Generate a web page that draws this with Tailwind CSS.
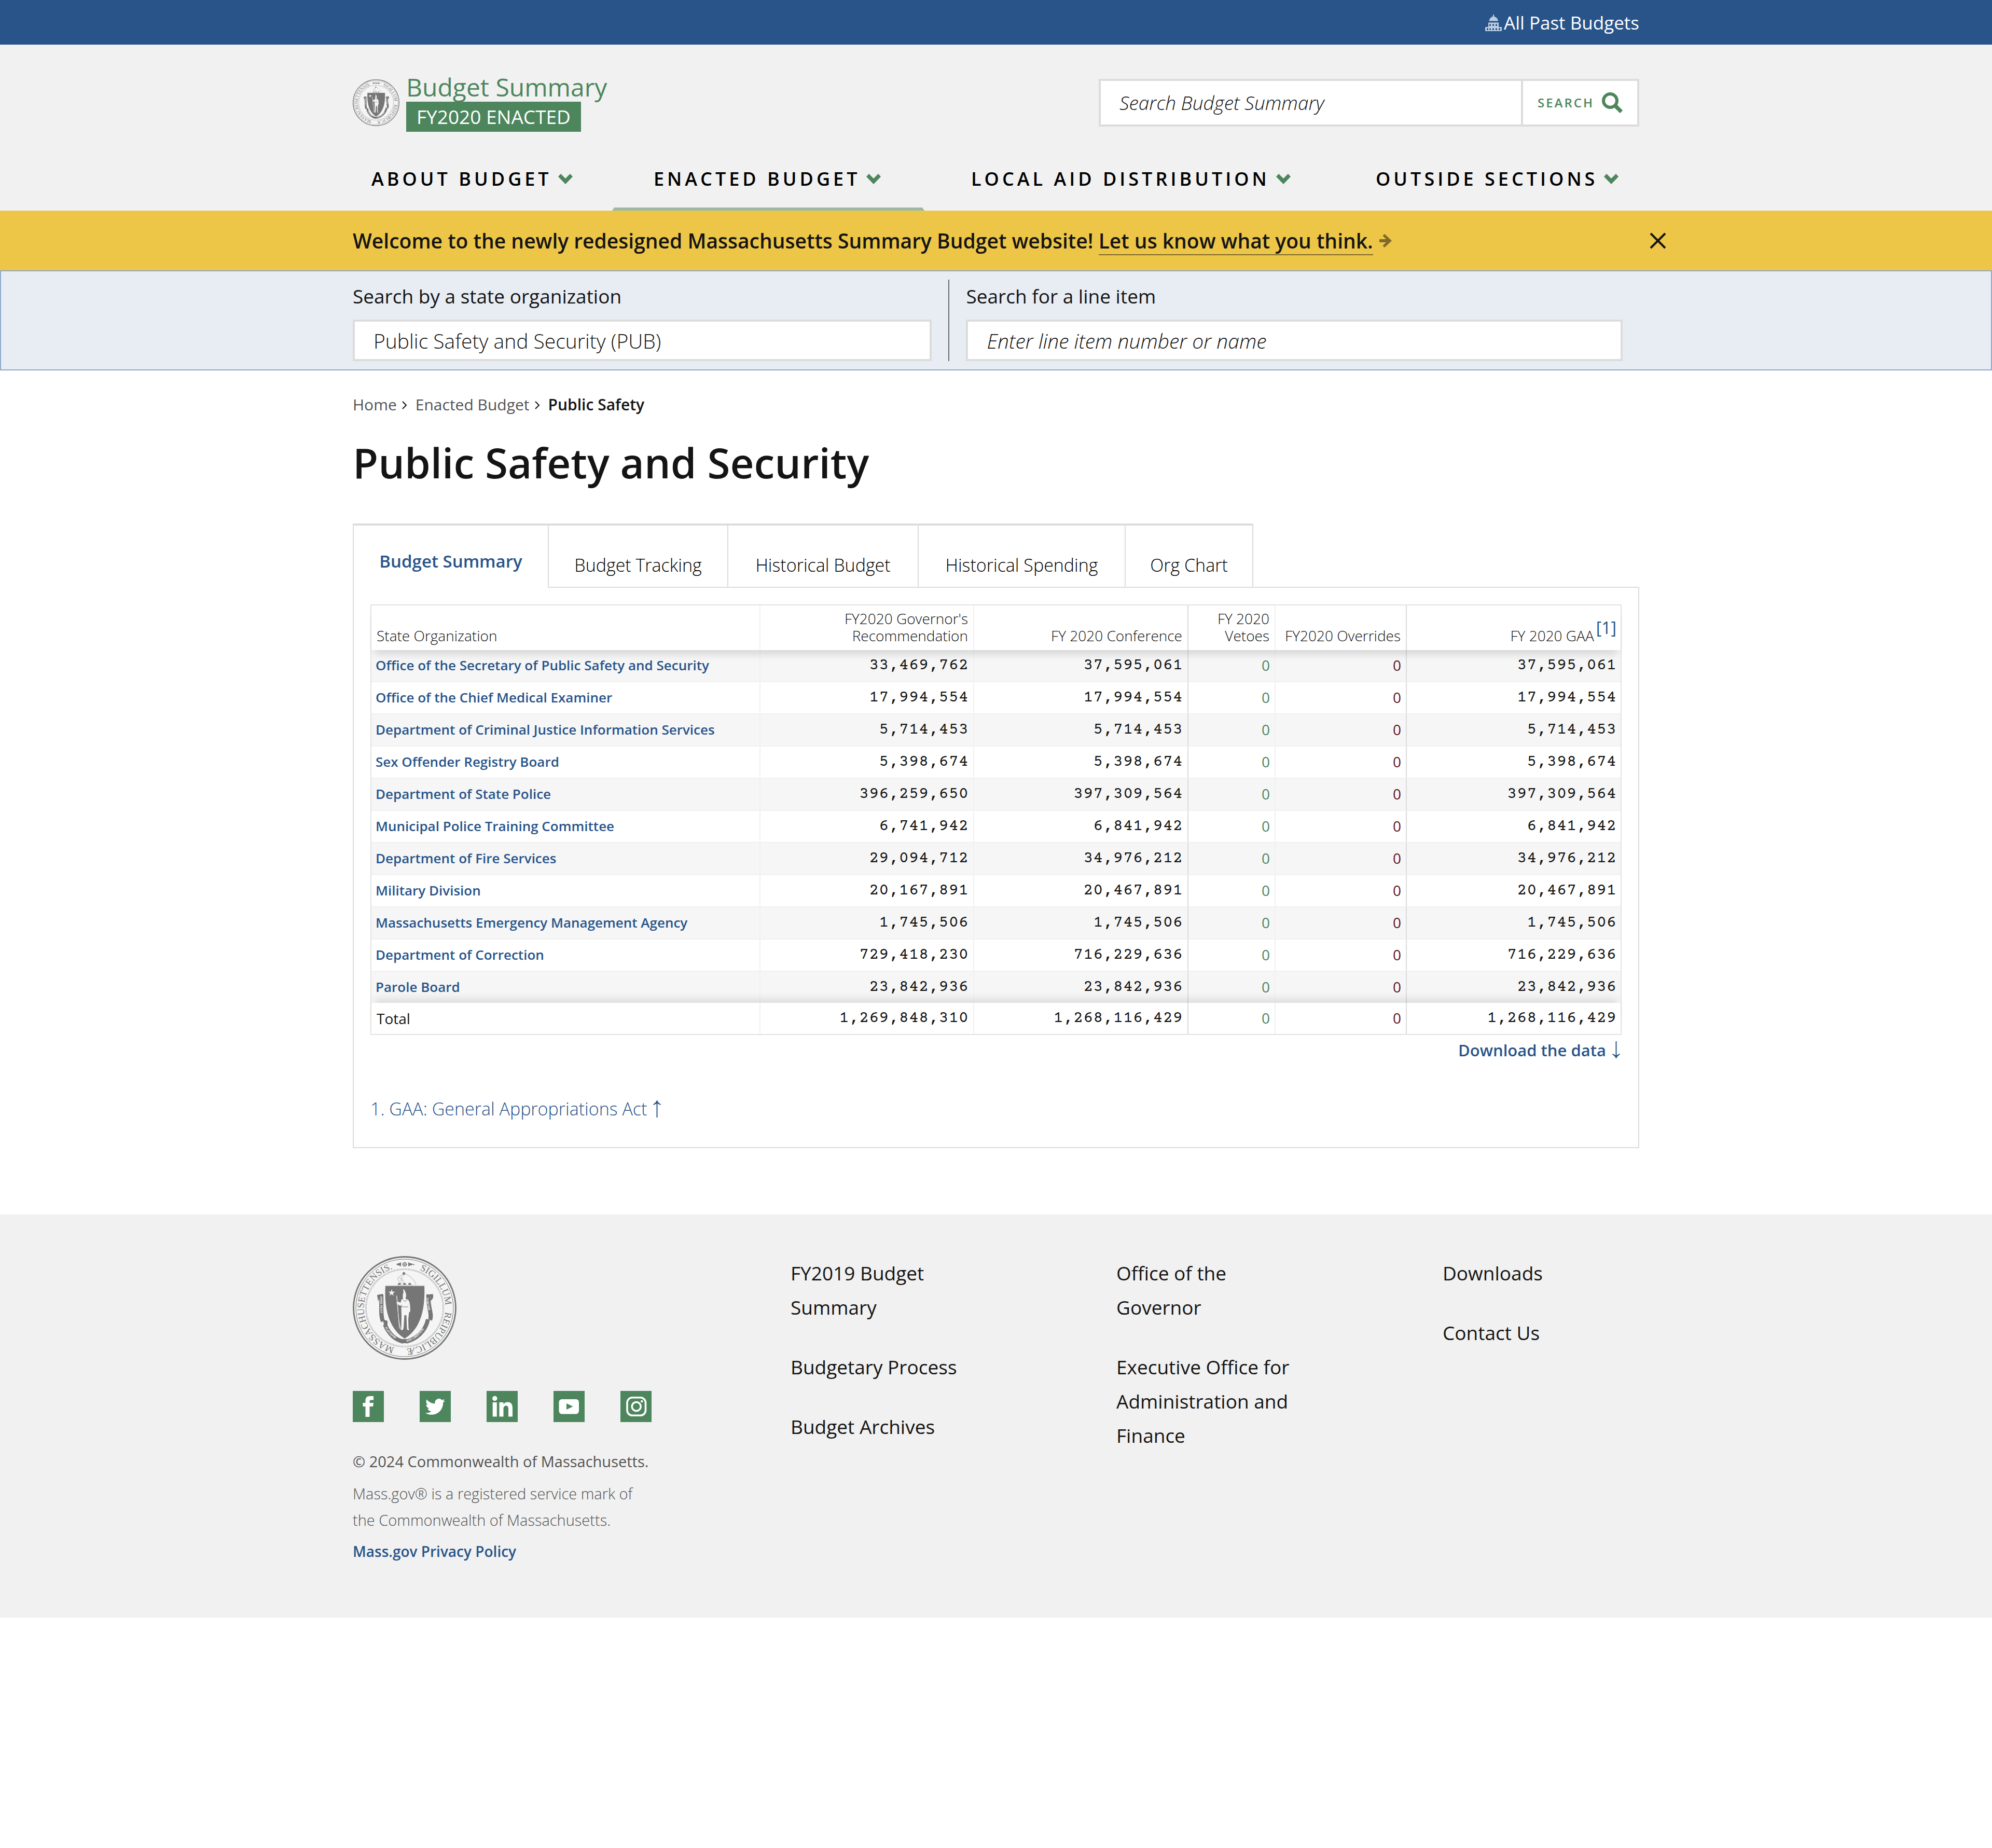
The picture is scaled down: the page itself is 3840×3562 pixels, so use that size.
<!DOCTYPE html>
<html lang="en">
<head>
<meta charset="utf-8">
<meta name="viewport" content="width=device-width, initial-scale=1">
<title>Public Safety and Security - Budget Summary FY2020 Enacted</title>
<script src="https://cdn.jsdelivr.net/npm/@tailwindcss/browser@4"></script>
</head>
<body class="bg-white font-['Open_Sans',sans-serif] text-[#141414]">

<!-- Shared symbols -->
<svg class="hidden" aria-hidden="true">
  <symbol id="chevron" viewBox="0 0 28 20"><path fill="#4d865d" d="M5 0 14 9 23 0 28 5.500 14 20 0 5.500Z"/></symbol>
  <symbol id="seal" viewBox="0 0 200 200">
    <defs>
      <path id="ring" d="M100 21.500A78.500 78.500 0 0 1 100 178.500A78.500 78.500 0 0 1 100 21.500"/>
      <path id="ribbon-l" d="M55 78C56 98 53 112 58 126"/>
      <path id="ribbon-ll" d="M62 138C70 152 84 163 98 166.500"/>
      <path id="ribbon-rr" d="M104 166C122 160 140 146 144 122"/>
      <path id="ribbon-r" d="M144 80C144 98 152 112 149 120"/>
    </defs>
    <circle cx="100" cy="100" r="98.500" fill="#f5f5f5" stroke="#767676" stroke-width="2.800"/>
    <circle cx="100" cy="100" r="94" fill="none" stroke="#767676" stroke-width="1"/>
    <circle cx="100" cy="100" r="74.500" fill="none" stroke="#858585" stroke-width="2.600" stroke-dasharray="1.600 1.400"/>
    <circle cx="100" cy="100" r="74.500" fill="none" stroke="#f5f5f5" stroke-width="0.900"/>
    <g fill="#767676" font-family="'Liberation Serif', serif" font-size="18.500">
      <text><textPath href="#ring" startOffset="6%">SIGILLUM</textPath></text>
      <text><textPath href="#ring" startOffset="26.500%">REIPUBLICÆ</textPath></text>
      <text><textPath href="#ring" startOffset="54%">MASSACHUSETTENSIS.</textPath></text>
    </g>
    <g fill="#767676">
      <circle cx="100" cy="16" r="3.200" fill="none" stroke="#767676" stroke-width="2.600" stroke-dasharray="2 0.600"/>
      <circle cx="100" cy="16" r="1.100"/>
      <path d="M93 12V20L89 18 86 17.500A1.500 1.500 0 1 1 86 14.500L89 14ZM107 12V20L111 18 114 17.500A1.500 1.500 0 1 0 114 14.500L111 14Z"/>
      <circle cx="117.500" cy="16.500" r="1.200"/>
      <path d="M63 57.500H138C140 104 130 141 100 159 71 141 60 104 63 57.500Z"/>
      <path d="M87 54C88 51 91 51 93 54 91 56 88 56 87 54ZM97 54C98 51 101 51 103 54 101 56 98 56 97 54ZM107 54C108 51 111 51 113 54 111 56 108 56 107 54Z"/>
      <circle cx="98.500" cy="33.500" r="2.600"/>
    </g>
    <g fill="none" stroke="#9a9a9a" stroke-width="0.800">
      <path d="M97 35 88 41C85 44 87 46 91 50L96 53M100 35C96 40 93 42 94 45L99 51M101 34C111 38 119 46 122 56M90 42 95 44M92 47 97 46"/>
      <path d="M85 56H116"/>
    </g>
    <path fill="none" stroke="#d4d4d4" stroke-width="1" d="M62 57H139"/>
    <g fill="none" stroke="#767676" stroke-width="8">
      <path d="M55 74C56 98 53 112 58 126"/>
      <path d="M62 132C70 152 84 162 97 165"/>
      <path d="M103 165C122 160 140 146 145 122"/>
      <path d="M146 74C144 98 154 112 149 123"/>
    </g>
    <g fill="#767676">
      <path d="M47 75 58 73 57 80 51 82 49 88ZM142 75 154 73C157 78 154 84 150 86L150 78ZM58 122 67 125 67 134 60 132ZM95 160H105V168H95Z"/>
    </g>
    <g fill="#f0f0f0" font-family="'Liberation Sans', sans-serif" font-weight="700" font-size="5.500">
      <text dy="2"><textPath href="#ribbon-l">ENSE PETIT</textPath></text>
      <text dy="0"><textPath href="#ribbon-ll">PLACIDAM</textPath></text>
      <text dy="0"><textPath href="#ribbon-rr">SVB LIBERTATE</textPath></text>
      <text dy="2"><textPath href="#ribbon-r">QVIETEM</textPath></text>
    </g>
    <g fill="#f5f5f5">
      <path d="M75 64 76.600 68.800H81.600L77.500 71.700 79 76.500 75 73.500 71 76.500 72.500 71.700 68.400 68.800H73.400Z"/>
      <path d="M97 64C100 64 101 68 102 71 103.500 74 103 79 101.500 82L106 84C109 86 110 90 110.500 95L111 106 108.500 109 107 122 107.500 140C110 142 109 143 106 142.500L104.500 141 103.500 114H99.500L98 138 97 142C94 143.500 92 142 93.500 140L94 114 93.500 100 95 94 92 96C89 95 86 93 84 90L88 88 92 90 94 84 97 82C96 78 96.500 72 98 70Z"/>
    </g>
    <path d="M84.500 76C88 95 86 120 93 142M84.500 76 90 140" fill="none" stroke="#e8e8e8" stroke-width="1"/>
    <path d="M95 98H107M97 84C99 88 103 88 104 84M101 115V139" fill="none" stroke="#767676" stroke-width="1"/>
  </symbol>
</svg>

<div class="bg-[#28548a]">
  <div class="mx-auto flex w-full max-w-[2480px] justify-end pt-5 pb-[18px]">
    <a href="#" class="flex items-center gap-1 text-[35px] leading-[48px] text-white">
      <svg class="size-8" viewBox="0 0 32 32" fill="#bccde0" aria-hidden="true">
        <path d="M15 0H17V3.500C21.500 5 24.500 8 25 12.500H7.500C8 8 10.500 5 15 3.500ZM6 15.500H26V24H31A1 1 0 0 1 32 25V31A1 1 0 0 1 31 32H1A1 1 0 0 1 0 31V25A1 1 0 0 1 1 24H6Z"/>
        <path fill="#28548a" d="M8 18.500H11V22H8ZM14 18.500H17V22H14ZM20 18.500H23V22H20ZM3 26.500H6V30H3ZM8.500 26.500H11V30H8.500ZM14 26.500H17V30H14ZM20 26.500H23V30H20ZM26 26.500H29V30H26Z"/>
      </svg>
      All Past Budgets
    </a>
  </div>
</div>

<header class="bg-[#f1f1f1]">
  <div class="mx-auto w-full max-w-[2480px]">
    <div class="flex h-[198px] items-start justify-between">
      <a href="#" class="flex items-start gap-[13px] pt-[60px]">
        <svg class="mt-[7px] size-[90px]" role="img" aria-label="Seal of Massachusetts"><use href="#seal"/></svg>
        <span class="flex flex-col items-start gap-[6px]">
          <span class="text-[48px] leading-[44px] font-medium text-[#4d865d]">Budget Summary</span>
          <span class="bg-[#4d865d] px-5 text-[37px] leading-[58px] text-white">FY2020 ENACTED</span>
        </span>
      </a>
      <form class="mt-[66px] flex h-[92px] w-[1042px] border-4 border-[#dcdcdc] bg-white">
        <input type="text" aria-label="Search Budget Summary" placeholder="Search Budget Summary" class="min-w-0 flex-1 px-9 text-[37px] font-light italic placeholder:text-[#141414]">
        <button type="button" class="flex w-[224px] items-center justify-between border-l-4 border-[#dcdcdc] px-7 text-[24px] font-semibold tracking-[3px] text-[#4d865d]">SEARCH
          <svg class="size-10" viewBox="0 0 40 40" fill="none" stroke="#4d865d" aria-hidden="true"><circle cx="16" cy="16" r="13" stroke-width="6"/><path d="M25 25 37.500 37.500" stroke-width="7.500"/></svg>
        </button>
      </form>
    </div>
    <nav class="grid grid-cols-[500fr_602fr_790fr_588fr] text-[36px] leading-[122px] font-semibold tracking-[6px] whitespace-nowrap text-black">
      <a href="#" class="flex items-center gap-3 pl-9">ABOUT BUDGET <svg class="h-5 w-7"><use href="#chevron"/></svg></a>
      <a href="#" class="relative flex items-center gap-3 pl-20">ENACTED BUDGET <svg class="h-5 w-7"><use href="#chevron"/></svg>
        <span class="absolute inset-x-0 bottom-0 border-x-4 border-b-[6px] border-x-transparent border-b-[#9db9a6]"></span></a>
      <a href="#" class="flex items-center gap-3 pl-[90px]">LOCAL AID DISTRIBUTION <svg class="h-5 w-7"><use href="#chevron"/></svg></a>
      <a href="#" class="flex items-center gap-3 pl-20">OUTSIDE SECTIONS <svg class="h-5 w-7"><use href="#chevron"/></svg></a>
    </nav>
  </div>
</header>

<div class="bg-[#edc647]">
  <div class="relative mx-auto flex h-[115px] w-full max-w-[2480px] items-center">
    <p class="text-[39px] leading-[48px] font-semibold">Welcome to the newly redesigned Massachusetts Summary Budget website! <a href="#" class="border-b-2 border-[#80692b]">Let us know what you think.</a></p>
    <svg class="ml-3 h-[26px] w-6" viewBox="0 0 24 26" fill="#80692b" aria-hidden="true"><path d="M0 10H13L6.500 3.500 10 0 24 13 10 26 6.500 22.500 13 16H0Z"/></svg>
    <button type="button" aria-label="Close" class="absolute -right-[52px]"><svg class="size-8" viewBox="0 0 32 32" stroke="#141414" stroke-width="4" aria-hidden="true"><path d="M2 2 30 30M30 2 2 30"/></svg></button>
  </div>
</div>

<section class="border-2 border-[#8fa8cb] bg-[#e8edf4] py-4">
  <div class="mx-auto flex w-full max-w-[2480px] pr-8">
    <div class="flex flex-[1116] flex-col gap-[13px]">
      <label for="org" class="text-[37px] leading-[64px]">Search by a state organization</label>
      <input id="org" type="text" value="Public Safety and Security (PUB)" class="h-20 w-full border-4 border-[#dcdcdc] bg-white px-9 text-[39px] font-light">
    </div>
    <div class="mx-8 w-[2px] bg-[#6b6b6b]"></div>
    <div class="flex flex-[1265] flex-col gap-[13px]">
      <label for="item" class="text-[37px] leading-[64px]">Search for a line item</label>
      <input id="item" type="text" placeholder="Enter line item number or name" class="h-20 w-full border-4 border-[#dcdcdc] bg-white px-9 text-[39px] font-light italic placeholder:text-[#141414]">
    </div>
  </div>
</section>

<main class="mx-auto w-full max-w-[2480px] pt-[46px]">
  <nav aria-label="Breadcrumb" class="flex text-[30px] leading-10 text-[#535353]">
    <a href="#">Home</a>
    <svg class="mr-4 ml-2 h-10 w-3" viewBox="0 0 12 40" fill="none" stroke="#141414" stroke-width="2" aria-hidden="true"><path d="M3 14 10 21 3 28"/></svg>
    <a href="#">Enacted Budget</a>
    <svg class="mr-4 ml-2 h-10 w-3" viewBox="0 0 12 40" fill="none" stroke="#141414" stroke-width="2" aria-hidden="true"><path d="M3 14 10 21 3 28"/></svg>
    <span class="font-semibold text-[#141414]">Public Safety</span>
  </nav>
  <h1 class="mt-[43px] text-[80px] leading-[96px] font-semibold">Public Safety and Security</h1>

  <div role="tablist" class="relative mt-[70px] flex w-fit items-start border-t-4 border-[#dcdcdc] text-[34px] leading-10 text-black">
    <button role="tab" aria-selected="true" class="-mb-[2px] h-[120px] w-[378px] border-x-2 border-[#dcdcdc] bg-white pt-[17px] text-[33px] font-semibold text-[#28548a]">Budget Summary</button>
    <button role="tab" class="h-[118px] w-[346px] border-r-2 border-[#dcdcdc] pt-[33px] font-light">Budget Tracking</button>
    <button role="tab" class="h-[118px] w-[367px] border-r-2 border-[#dcdcdc] pt-[33px] font-light">Historical Budget</button>
    <button role="tab" class="h-[118px] w-[399px] border-r-2 border-[#dcdcdc] pt-[33px] font-light">Historical Spending</button>
    <button role="tab" class="h-[118px] w-[246px] border-r-2 border-[#dcdcdc] pt-[33px] font-light">Org Chart</button>
  </div>

  <section class="border-2 border-[#dcdcdc] px-8 pt-8 pb-[54px]">
    <table class="w-full table-fixed border-separate border-spacing-0 border-2 border-[#e3e3e3] text-right font-['Courier_Prime','Courier_New','Liberation_Mono',monospace] text-[32px] leading-[40px] [&_a]:text-[#28548a] [&_td]:px-[9px] [&_td]:py-0 [&_th]:px-[10px] [&_tr>*]:border-r-2 [&_tr>*]:border-[#f1f1f1] [&_tr>*:nth-child(3)]:border-r-[#dcdcdc] [&_tr>*:nth-child(5)]:border-r-[#dcdcdc] [&_tr>*:last-child]:border-r-0 [&_tr>*:last-child]:pr-2 [&_tbody_td]:h-[62px] [&_tbody_td]:border-b-2 [&_tbody_tr:nth-child(odd)]:bg-[#f6f6f6] [&_tbody_tr:last-child>*]:h-[60px] [&_tbody_tr:last-child>*]:border-b-0 [&_tbody_th]:border-b-2 [&_tbody_th]:pb-[2px] [&_tbody_th]:pl-2 [&_tbody_th]:text-left [&_tbody_th]:font-['Open_Sans',sans-serif] [&_tbody_th]:text-[26px] [&_tbody_th]:font-semibold [&_td:nth-child(4)]:pb-[2px] [&_td:nth-child(4)]:font-['Open_Sans',sans-serif] [&_td:nth-child(4)]:text-[28px] [&_td:nth-child(4)]:text-[#4d865d] [&_td:nth-child(5)]:pb-[2px] [&_td:nth-child(5)]:font-['Open_Sans',sans-serif] [&_td:nth-child(5)]:text-[28px] [&_td:nth-child(5)]:text-[#5f1427]">
      <colgroup><col class="w-[750px]"><col class="w-[412px]"><col class="w-[413px]"><col class="w-[168px]"><col class="w-[253px]"><col class="w-[412px]"></colgroup>
      <thead class="relative z-10 h-[86px] align-bottom font-['Open_Sans',sans-serif] text-[28px] leading-[33px] shadow-[0_14px_14px_-6px_rgba(0,0,0,0.13)] [&_th]:pb-[11px] [&_th]:align-bottom [&_th]:font-light">
        <tr>
          <th scope="col" class="text-left">State Organization</th>
          <th scope="col">FY2020 Governor's<br>Recommendation</th>
          <th scope="col">FY 2020 Conference</th>
          <th scope="col">FY 2020 Vetoes</th>
          <th scope="col" class="whitespace-nowrap">FY2020 Overrides</th>
          <th scope="col"><span class="flex items-start justify-end gap-1"><span class="pt-4">FY 2020 GAA</span><a href="#fn1" class="text-[32px] font-normal">[1]</a></span></th>
        </tr>
      </thead>
      <tbody>
        <tr><th scope="row"><a href="#">Office of the Secretary of Public Safety and Security</a></th><td>33,469,762</td><td>37,595,061</td><td>0</td><td>0</td><td>37,595,061</td></tr>
        <tr><th scope="row"><a href="#">Office of the Chief Medical Examiner</a></th><td>17,994,554</td><td>17,994,554</td><td>0</td><td>0</td><td>17,994,554</td></tr>
        <tr><th scope="row"><a href="#">Department of Criminal Justice Information Services</a></th><td>5,714,453</td><td>5,714,453</td><td>0</td><td>0</td><td>5,714,453</td></tr>
        <tr><th scope="row"><a href="#">Sex Offender Registry Board</a></th><td>5,398,674</td><td>5,398,674</td><td>0</td><td>0</td><td>5,398,674</td></tr>
        <tr><th scope="row"><a href="#">Department of State Police</a></th><td>396,259,650</td><td>397,309,564</td><td>0</td><td>0</td><td>397,309,564</td></tr>
        <tr><th scope="row"><a href="#">Municipal Police Training Committee</a></th><td>6,741,942</td><td>6,841,942</td><td>0</td><td>0</td><td>6,841,942</td></tr>
        <tr><th scope="row"><a href="#">Department of Fire Services</a></th><td>29,094,712</td><td>34,976,212</td><td>0</td><td>0</td><td>34,976,212</td></tr>
        <tr><th scope="row"><a href="#">Military Division</a></th><td>20,167,891</td><td>20,467,891</td><td>0</td><td>0</td><td>20,467,891</td></tr>
        <tr><th scope="row"><a href="#">Massachusetts Emergency Management Agency</a></th><td>1,745,506</td><td>1,745,506</td><td>0</td><td>0</td><td>1,745,506</td></tr>
        <tr><th scope="row"><a href="#">Department of Correction</a></th><td>729,418,230</td><td>716,229,636</td><td>0</td><td>0</td><td>716,229,636</td></tr>
        <tr><th scope="row"><a href="#">Parole Board</a></th><td>23,842,936</td><td>23,842,936</td><td>0</td><td>0</td><td>23,842,936</td></tr>
      </tbody>
      <tfoot class="relative z-10 h-[60px] shadow-[0_-14px_14px_-6px_rgba(0,0,0,0.1)]">
        <tr><th scope="row" class="text-left font-['Open_Sans',sans-serif] text-[28px] font-normal">Total</th><td>1,269,848,310</td><td>1,268,116,429</td><td>0</td><td>0</td><td>1,268,116,429</td></tr>
      </tfoot>
    </table>
    <div class="mt-[9px] flex justify-end pr-[3px]">
      <a href="#" class="flex items-center gap-3 text-[31px] leading-10 font-semibold text-[#28548a]">Download the data
        <svg class="h-[34px] w-[15px]" viewBox="0 0 15 34" fill="#28548a" aria-hidden="true"><path d="M6.500 0H8.500V27L14 24 15 25.500C11 28 9 30 7.500 34 6 30 4 28 0 25.500L1 24 6.500 27Z"/></svg></a>
    </div>
    <p id="fn1" class="mt-[73px]"><a href="#" class="flex items-center gap-3 text-[34px] leading-10 font-light text-[#28548a]">1. GAA: General Appropriations Act
      <svg class="h-[34px] w-[15px] rotate-180" viewBox="0 0 15 34" fill="#28548a" aria-hidden="true"><path d="M6.500 0H8.500V27L14 24 15 25.500C11 28 9 30 7.500 34 6 30 4 28 0 25.500L1 24 6.500 27Z"/></svg></a></p>
  </section>
</main>

<footer class="mt-32 bg-[#f1f1f1] pt-20 pb-[102px]">
  <div class="mx-auto grid w-full max-w-[2480px] grid-cols-[844fr_628fr_629fr_379fr]">
    <div>
      <svg class="size-[200px]" role="img" aria-label="Seal of Massachusetts"><use href="#seal"/></svg>
      <div class="mt-[60px] flex gap-[69px]">
        <a href="#" aria-label="Facebook" class="size-[60px] bg-[#4d865d]"><svg viewBox="0 0 60 60" fill="#fff"><path d="M24.500 50V30H19.500V23H24.500V18.500C24.500 13 27.500 10 33 10H40V17.500H35.500C33.500 17.500 32.500 18.500 32.500 20.500V23H40L39 30H32.500V50Z"/></svg></a>
        <a href="#" aria-label="Twitter" class="size-[60px] bg-[#4d865d]"><svg viewBox="0 0 60 60" fill="#fff"><g transform="translate(11 11.500) scale(1.580)"><path d="M23.953 4.570a10 10 0 01-2.825.775 4.958 4.958 0 002.163-2.723c-.951.555-2.005.959-3.127 1.184a4.920 4.920 0 00-8.384 4.482C7.690 8.095 4.067 6.130 1.640 3.162a4.822 4.822 0 00-.666 2.475c0 1.710.870 3.213 2.188 4.096a4.904 4.904 0 01-2.228-.616v.060a4.923 4.923 0 003.946 4.827 4.996 4.996 0 01-2.212.085 4.936 4.936 0 004.604 3.417 9.867 9.867 0 01-6.102 2.105c-.390 0-.779-.023-1.170-.067a13.995 13.995 0 007.557 2.209c9.053 0 13.998-7.496 13.998-13.985 0-.210 0-.420-.015-.630A9.935 9.935 0 0024 4.590z"/></g></svg></a>
        <a href="#" aria-label="LinkedIn" class="size-[60px] bg-[#4d865d]"><svg viewBox="0 0 60 60" fill="#fff"><circle cx="15.800" cy="14.500" r="4.700"/><path d="M11.700 22H19.800V49.500H11.700ZM24.500 22H32.500V26C34 23 37 21.500 40.500 21.500 47.500 21.500 50 26 50 33V49.500H42V35C42 31 41 28.500 37.700 28.500 34 28.500 32.500 31 32.500 35V49.500H24.500Z"/></svg></a>
        <a href="#" aria-label="YouTube" class="size-[60px] bg-[#4d865d]"><svg viewBox="0 0 60 60" fill="#fff"><path fill-rule="evenodd" d="M17 16H42.500C47 16 49 18 49 23V37C49 42 47 44.500 42.500 44.500H17C12.500 44.500 10.500 42 10.500 37V23C10.500 18 12.500 16 17 16ZM25 24V36L37.500 30Z"/></svg></a>
        <a href="#" aria-label="Instagram" class="size-[60px] bg-[#4d865d]"><svg viewBox="0 0 60 60" fill="none" stroke="#fff" stroke-width="3.600"><rect x="13" y="12.800" width="35.500" height="34.500" rx="10"/><circle cx="30.700" cy="30" r="8.500"/><circle cx="41.300" cy="20" r="2.200" fill="#fff" stroke="none"/></svg></a>
      </div>
      <p class="mt-[50px] text-[29px] leading-[52px] text-[#535353]">© 2024 Commonwealth of Massachusetts.</p>
      <p class="mt-[10px] text-[29px] leading-[51px] font-light text-[#535353]">Mass.gov® is a registered service mark of<br>the Commonwealth of Massachusetts.</p>
      <p class="mt-[10px] text-[28px] leading-[51px]"><a href="#" class="font-semibold text-[#28548a]">Mass.gov Privacy Policy</a></p>
    </div>
    <ul class="flex flex-col gap-[49px] text-[37px] leading-[66px]">
      <li class="max-w-[360px]"><a href="#">FY2019 Budget Summary</a></li>
      <li class="max-w-[360px]"><a href="#">Budgetary Process</a></li>
      <li class="max-w-[360px]"><a href="#">Budget Archives</a></li>
    </ul>
    <ul class="flex flex-col gap-[49px] text-[37px] leading-[66px]">
      <li class="max-w-[360px]"><a href="#">Office of the Governor</a></li>
      <li class="max-w-[360px]"><a href="#">Executive Office for Administration and Finance</a></li>
    </ul>
    <ul class="flex flex-col gap-[49px] text-[37px] leading-[66px]">
      <li><a href="#">Downloads</a></li>
      <li><a href="#">Contact Us</a></li>
    </ul>
  </div>
</footer>
</body>
</html>
